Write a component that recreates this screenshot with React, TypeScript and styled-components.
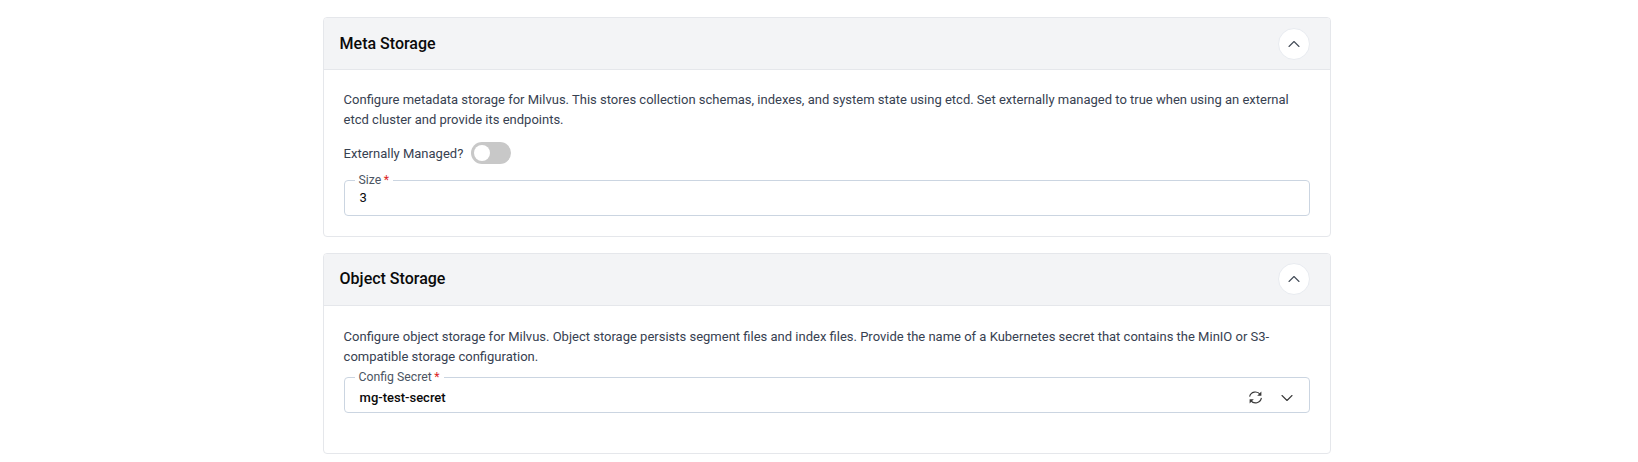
import React from 'react';
import styled, { createGlobalStyle } from 'styled-components';
import { ChevronUp, ChevronDown } from 'lucide-react';

const GlobalStyle = createGlobalStyle`
  html, body {
    margin: 0;
    padding: 0;
    background: #fff;
    font-family: Roboto, "Liberation Sans", sans-serif;
  }
`;

const Page = styled.div`
  width: 1008px;
  margin-left: 322.6px;
  padding-top: 17px;
  display: flex;
  flex-direction: column;
  gap: 16px;
`;

const Card = styled.section`
  border: 1px solid #e5e7eb;
  border-radius: 4px;
  overflow: hidden;
  background: #fff;
`;

const CardHeader = styled.div<{ $lift: number }>`
  height: ${p => 51 - p.$lift}px;
  background: #f3f4f6;
  border-bottom: 1px solid #e5e7eb;
  display: flex;
  align-items: center;
  justify-content: space-between;
  padding: 0 20px ${p => p.$lift}px 16px;
`;

const CardTitle = styled.h3`
  margin: 0;
  font-size: 16px;
  font-weight: 500;
  color: #0a0a0a;
`;

const CollapseButton = styled.button`
  width: 32px;
  height: 32px;
  padding: 0;
  border-radius: 50%;
  border: 1px solid #e8ebf0;
  background: #fff;
  color: #444c58;
  display: flex;
  align-items: center;
  justify-content: center;
`;

const CardBody = styled.div<{ $top: number; $bottom: number }>`
  padding: ${p => p.$top}px 20px ${p => p.$bottom}px 20px;
`;

const Description = styled.p`
  margin: 0;
  font-size: 13px;
  line-height: 20.8px;
  color: #374151;
`;

const SwitchRow = styled.div`
  margin-top: 11px;
  display: flex;
  align-items: center;
  gap: 8px;
  height: 22px;
  font-size: 13px;
  color: #374151;
`;

const SwitchTrack = styled.div`
  width: 40px;
  height: 22px;
  border-radius: 11px;
  background: #c8c8c8;
  padding: 3px;
  box-sizing: border-box;
`;

const SwitchThumb = styled.div`
  width: 16px;
  height: 16px;
  border-radius: 50%;
  background: #fff;
`;

const Field = styled.fieldset<{ $top: number }>`
  margin: ${p => p.$top}px 0 0;
  padding: 0 15px;
  height: 43px;
  box-sizing: border-box;
  border: 1px solid #cbd5e1;
  border-radius: 4px;
  display: block;
  min-width: 0;
`;

const FieldLegend = styled.legend`
  padding: 0 4px;
  margin-left: -5px;
  font-size: 12.25px;
  line-height: 14px;
  height: 14px;
  color: #4b5563;
`;

const Required = styled.span`
  color: #dc2626;
  margin-left: 2.5px;
`;

const FieldRow = styled.div<{ $height: number }>`
  height: ${p => p.$height}px;
  display: flex;
  align-items: center;
  justify-content: space-between;
`;

const FieldValue = styled.span<{ $weight: number }>`
  font-size: 13px;
  font-weight: ${p => p.$weight};
  color: #0a0a0a;
`;

const FieldIcons = styled.div`
  display: flex;
  align-items: center;
  gap: 14px;
  margin-right: -3px;
  color: #3a3a3a;
`;

const RefreshIcon = () => (
  <svg width="15" height="15" viewBox="0 0 15 15" fill="none">
    <path d="M1.6 6.6A6 6 0 0 1 12.2 4.4" stroke="currentColor" strokeWidth="1.1" />
    <path d="M13.4 7.9A6 6 0 0 1 2.8 10.6" stroke="currentColor" strokeWidth="1.1" />
    <path d="M13.4 1.6V5.8H9.2Z" fill="currentColor" />
    <path d="M1.6 13.4V9.2H5.8Z" fill="currentColor" />
  </svg>
);

export default function App() {
  return (
    <>
      <GlobalStyle />
      <Page>
        <Card>
          <CardHeader $lift={0}>
            <CardTitle>Meta Storage</CardTitle>
            <CollapseButton><ChevronUp size={20} strokeWidth={1.3} /></CollapseButton>
          </CardHeader>
          <CardBody $top={19.5} $bottom={20}>
            <Description>
              Configure metadata storage for Milvus. This stores collection schemas, indexes, and system state using etcd. Set externally managed to true when using an external etcd cluster and provide its endpoints.
            </Description>
            <SwitchRow>
              Externally Managed?
              <SwitchTrack><SwitchThumb /></SwitchTrack>
            </SwitchRow>
            <Field $top={9}>
              <FieldLegend>Size<Required>*</Required></FieldLegend>
              <FieldRow $height={20}><FieldValue $weight={400}>3</FieldValue></FieldRow>
            </Field>
          </CardBody>
        </Card>
        <Card>
          <CardHeader $lift={2}>
            <CardTitle>Object Storage</CardTitle>
            <CollapseButton><ChevronUp size={20} strokeWidth={1.3} /></CollapseButton>
          </CardHeader>
          <CardBody $top={20.5} $bottom={39.5}>
            <Description>
              Configure object storage for Milvus. Object storage persists segment files and index files. Provide the name of a Kubernetes secret that contains the MinIO or S3-compatible storage configuration.
            </Description>
            <Field $top={2}>
              <FieldLegend>Config Secret<Required>*</Required></FieldLegend>
              <FieldRow $height={27}>
                <FieldValue $weight={500}>mg-test-secret</FieldValue>
                <FieldIcons>
                  <RefreshIcon />
                  <ChevronDown size={20} strokeWidth={1.3} />
                </FieldIcons>
              </FieldRow>
            </Field>
          </CardBody>
        </Card>
      </Page>
    </>
  );
}
